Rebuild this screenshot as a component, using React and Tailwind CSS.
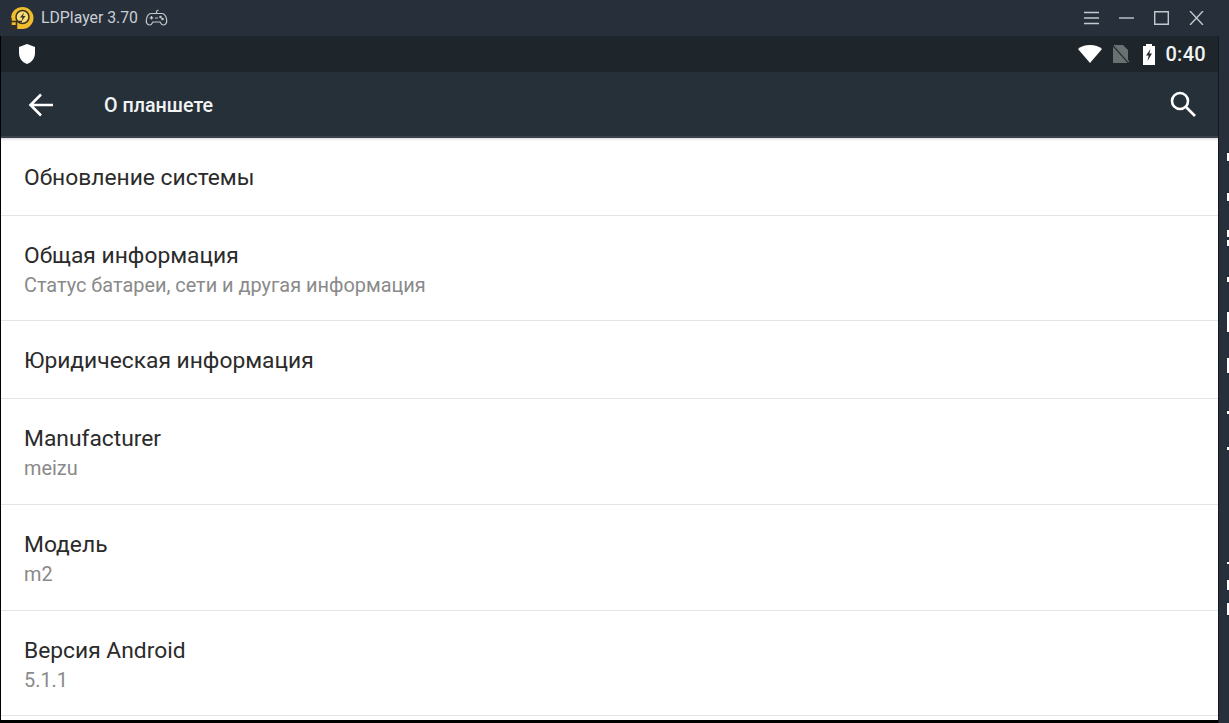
const rows = [
  { t: "Обновление системы", h: "h-[78px]" },
  { t: "Общая информация", s: "Статус батареи, сети и другая информация", h: "h-[105px]" },
  { t: "Юридическая информация", h: "h-[78px]" },
  { t: "Manufacturer", s: "meizu", h: "h-[106px]" },
  { t: "Модель", s: "m2", h: "h-[106px]" },
  { t: "Версия Android", s: "5.1.1", h: "h-[105px]" },
];

const ticks = [
  ["top-[117px]", "h-[8px]"],
  ["top-[157px]", "h-[8px]"],
  ["top-[194px]", "h-[7px]"],
  ["top-[204px]", "h-[6px]"],
  ["top-[241px]", "h-[5px]"],
  ["top-[276px]", "h-[20px]"],
  ["top-[322px]", "h-[15px]"],
  ["top-[375px]", "h-[3px]"],
  ["top-[411px]", "h-[3px]"],
  ["top-[526px]", "h-[2px]"],
  ["top-[544px]", "h-[10px]"],
  ["top-[567px]", "h-[12px]"],
];

function Logo() {
  return (
    <svg width="24" height="24" viewBox="0 0 24 24" className="shrink-0">
      <path d="M12.500 1a11 11 0 1 1 0 22H6v-4H1v-8A11 11 0 0 1 12.500 1z" fill="#f0bc2e" />
      <circle cx="12.500" cy="11" r="6.500" fill="#f7dc7a" stroke="#3a3320" strokeWidth="1.500" />
      <path d="M14 6.500L10 11.500h2.500l-1 4 4-5.500H13z" fill="#3a3320" />
      <path d="M1 15.500h11M6.500 15v8M1 11.500v11.500h5.500" fill="none" stroke="#3a3320" strokeWidth="1.500" />
    </svg>
  );
}

function Pad() {
  return (
    <svg width="23" height="18" viewBox="0 0 23 18" fill="none" stroke="#c3c8cc" strokeWidth="1.200" className="shrink-0">
      <path d="M6.500 4.500h10c2.800 0 4.200 1.500 5 5.500.7 3.500-.5 6-3 6-1.500 0-2.500-1-3.500-3h-7c-1 2-2 3-3.500 3-2.500 0-3.700-2.500-3-6 .8-4 2.200-5.500 5-5.500z" />
      <path d="M6.500 7v3.500M4.700 8.800h3.600M10 9h3" />
      <circle cx="15.500" cy="8" r=".7" /><circle cx="17.500" cy="10" r=".7" />
      <path d="M11.500 4.500V3c0-1 .8-1.800 2-2" />
    </svg>
  );
}

function Row({ t, s, h }) {
  return (
    <div className={`${h} shrink-0 flex flex-col justify-center pl-[23px] border-b border-[#e4e4e4] ${s ? "pt-[5px]" : "pt-[2px]"}`}>
      <div className="text-[22.800px] leading-[29px] text-[#2b2b2b]">{t}</div>
      {s && <div className="text-[19.900px] leading-[31px] text-[#8a8a8a]">{s}</div>}
    </div>
  );
}

export default function App() {
  return (
    <div className="w-[1229px] h-[723px] overflow-hidden flex flex-col bg-black font-['Roboto','Noto_Sans',sans-serif]">
      <div className="h-9 shrink-0 bg-[#272f3b] flex items-center pl-[10px] pr-[25px]">
        <Logo />
        <span className="ml-[7px] text-[15.800px] text-[#c9ced3]">LDPlayer 3.70</span>
        <span className="ml-[7px] flex"><Pad /></span>
        <div className="ml-auto flex items-center gap-[20px]">
          <svg width="15" height="14" viewBox="0 0 15 14" stroke="#c3c9ce" strokeWidth="1.4"><path d="M0 1.500h15M0 7h15M0 12.500h15" /></svg>
          <svg width="15" height="14" viewBox="0 0 15 14" stroke="#c3c9ce" strokeWidth="1.4"><path d="M0 7h15" /></svg>
          <svg width="15" height="14" viewBox="0 0 15 14" fill="none" stroke="#c3c9ce" strokeWidth="1.400"><path d="M.7.700h13.600v12.600H.7z" /></svg>
          <svg width="15" height="14" viewBox="0 0 15 14" stroke="#c3c9ce" strokeWidth="1.400"><path d="M1 0l13 14M14 0L1 14" /></svg>
        </div>
      </div>

      <div className="flex-1 min-h-0 flex bg-[#272f3b]">
        <div className="w-[1219px] shrink-0 flex flex-col border-r border-[#14181f] pl-px bg-black">
          <div className="h-9 shrink-0 bg-[#1f262b] flex items-center pl-[17px] pr-[12px]">
            <svg width="18" height="22" viewBox="0 0 18 22" fill="#fff"><path d="M9 1l8 3v6c0 5.500-3.500 9.500-8 11-4.500-1.500-8-5.500-8-11V4z" /></svg>
            <div className="ml-auto flex items-center">
              <svg width="24" height="20" viewBox="0 0 24 20" fill="#fff"><path d="M12 19L0 5C3 2.500 7 1 12 1s9 1.500 12 4z" /></svg>
              <svg width="18" height="20" viewBox="0 0 18 20" className="ml-[10px]"><path d="M1 1h10l5 5v13H1z" fill="#6b7072" /><path d="M0 0l17 19" stroke="#1f262b" strokeWidth="2" /><path d="M2 1l15 17" stroke="#6b7072" strokeWidth="1.200" /></svg>
              <svg width="14" height="21" viewBox="0 0 14 21" className="ml-[12px]"><path d="M4 0h6v2h3v19H1V2h3z" fill="#fff" /><path d="M8.500 5L4 11.500h2.700L5.500 17 10 9.500H7.300z" fill="#1f262b" /></svg>
              <span className="ml-[9px] text-[20px] font-medium text-[#f2f4f4] tracking-[0.3px]">0:40</span>
            </div>
          </div>

          <div className="h-[66px] shrink-0 bg-[#263039] flex items-center pl-[27px] pr-[21px] pt-[2px] border-b-2 border-[#3a4148]">
            <svg width="26" height="26" viewBox="0 0 26 26" fill="none" stroke="#fff" strokeWidth="2.600"><path d="M25 13H3M13 2.500L2.500 13 13 23.500" /></svg>
            <span className="ml-[50px] pt-[2px] text-[19.700px] font-medium text-[#f2f3f3]">О планшете</span>
            <svg width="28" height="28" viewBox="0 0 28 28" fill="none" stroke="#fff" strokeWidth="2.600" className="ml-auto mb-[3px]"><circle cx="11" cy="11" r="8" /><path d="M17 17l9 9" /></svg>
          </div>

          <div className="flex-1 min-h-0 bg-white flex flex-col shadow-[inset_0_3px_3px_-2px_#d0d0d8]">
            {rows.map((r) => <Row key={r.t} {...r} />)}
          </div>
          <div className="h-[3px] shrink-0 bg-black" />
        </div>
        <div className="flex-1 relative bg-[#272f3b]">
          {ticks.map(([top, h]) => (
            <div key={top} className={`absolute right-0 w-[2px] bg-white ${top} ${h}`} />
          ))}
        </div>
      </div>
    </div>
  );
}
